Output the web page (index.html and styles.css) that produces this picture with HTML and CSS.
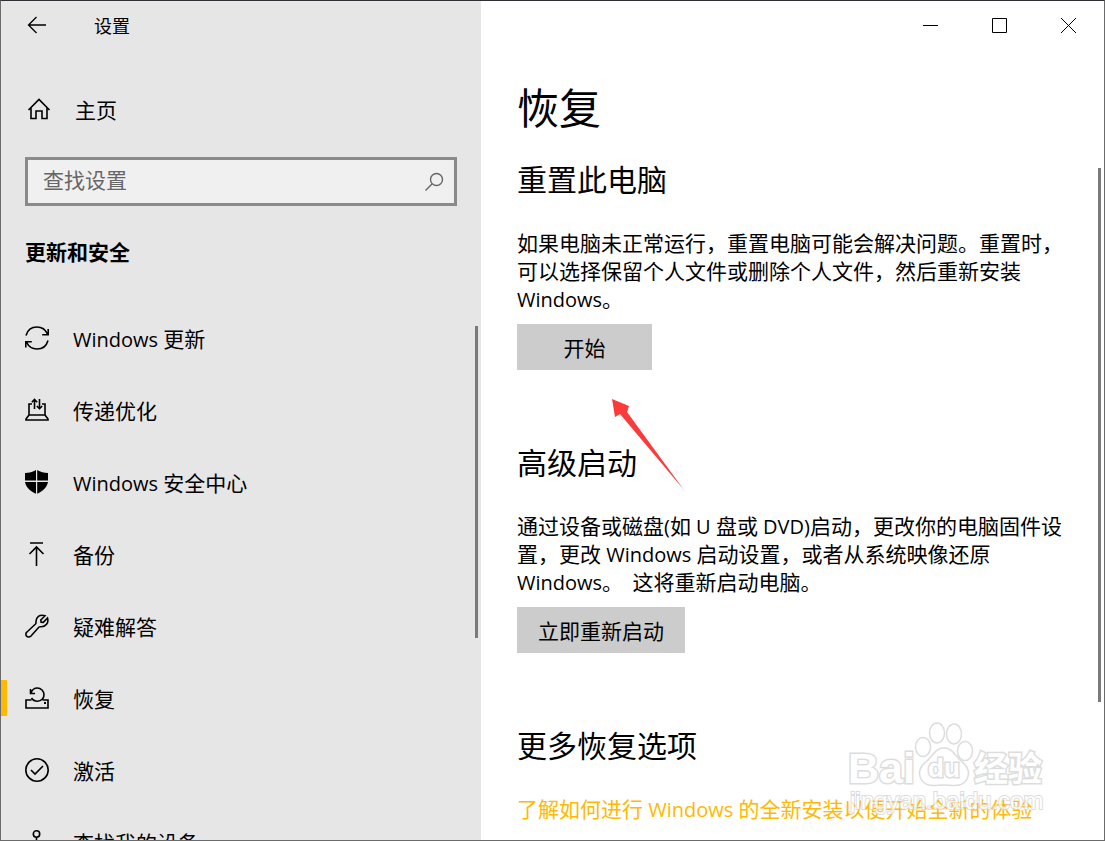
FILE: index.html
```html
<!DOCTYPE html>
<html lang="zh-CN">
<head>
<meta charset="utf-8">
<title>设置</title>
<link rel="stylesheet" href="styles.css">
</head>
<body>
<div class="window">
  <aside class="sidebar">
    <header class="side-bar-top">
      <button class="back" aria-label="返回"><svg width="20" height="18" viewBox="0 0 20 18"><path d="M19 9H1.500M9.500 1 1.500 9l8 8"/></svg></button>
      <span class="app-title">设置</span>
    </header>
    <a class="home" href="#"><svg width="24" height="24" viewBox="0 0 24 24"><path d="M1.500 13 12 2.500 22.500 13M4 11v10.500h5V14h6v7.500h5V11"/></svg>主页</a>
    <form class="search">
      <input class="search-input" type="search" aria-label="查找设置" placeholder="查找设置">
      <button class="search-button" type="button" aria-label="搜索"><svg width="20" height="20" viewBox="0 0 20 20"><circle cx="12.500" cy="7.500" r="6"/><path d="M8 12 1.500 18.500"/></svg></button>
    </form>
    <h2 class="category">更新和安全</h2>
    <nav class="nav">
      <a class="nav-item" href="#"><svg width="24" height="24" viewBox="0 0 24 24"><path d="M1 9.500C2.500 4 7 1 12 1c4.500 0 8.500 2.500 10.500 7M23.200 3v5.800h-6M23 14.500C21.500 20 17 23 12 23c-4.500 0-8.500-2.500-10.500-7M.8 21.500v-5.700h6"/></svg><span><span class="latin">Windows </span>更新</span></a>
      <a class="nav-item" href="#"><svg width="24" height="24" viewBox="0 0 24 24"><path d="M7 6H4v11h16V6h-3M4 17l-3 4v1h22v-1l-3-4M9.500 11V1.500M6.800 4.200l2.700-2.700 2.700 2.700M14.500 1v10M11.800 8l2.700 2.700L17.200 8"/></svg><span>传递优化</span></a>
      <a class="nav-item" href="#"><svg width="24" height="24" viewBox="0 0 24 24"><path class="solid" d="M11 0v10.500H0V3C4 3 8 2 11 0ZM12.200 0c3 2 7 3 10.800 3v7.500H12.200ZM0 12h11v11.800C5 21 .8 17 0 12ZM12.200 12H23c-.8 5-5 9-10.800 11.800Z"/></svg><span><span class="latin">Windows </span>安全中心</span></a>
      <a class="nav-item" href="#"><svg width="24" height="24" viewBox="0 0 24 24"><path d="M5 1h13M11.500 24V5M4.500 12l7-7 7 7"/></svg><span>备份</span></a>
      <a class="nav-item" href="#"><svg width="24" height="24" viewBox="0 0 24 24"><path d="M20 1.800 15.800 6l.3 2.200 2.200.2L22.500 4c1.500 5-1.800 9-6.500 8.800-1-.1-1.500-.2-2 .2L6 22c-1.500 1.500-3.500 1.300-4.500 0-1-1.200-.8-3 .5-4l8.500-8c.5-.5.500-1 .5-1.500C10.500 3 15 0 20 1.800Z"/></svg><span>疑难解答</span></a>
      <a class="nav-item current" href="#" aria-current="page"><svg width="24" height="24" viewBox="0 0 24 24"><path d="M6.500 14H1v8h22v-8h-5.500M5.500 3v4.500H10M6 7c1.200-3.500 3.500-5 6.300-5C16 2 19 5 19 8.700c0 3.600-2.800 6.500-6.500 6.500-2.800 0-4.800-1.200-6-3.200"/><path class="solid" d="M19 16h2v2h-2z"/></svg><span>恢复</span></a>
      <a class="nav-item" href="#"><svg width="24" height="24" viewBox="0 0 24 24"><circle cx="12" cy="12" r="11.200"/><path d="m6 12 4 4 8-8"/></svg><span>激活</span></a>
      <a class="nav-item" href="#"><svg width="24" height="24" viewBox="0 0 24 24"><circle cx="11.500" cy="4" r="3.200"/><path d="M11.500 7.200V16M7 13c-3 1-5 2.500-5 4.500C2 20 6 22 11.500 22s9.500-2 9.500-4.500c0-2-2-3.500-5-4.500"/></svg><span>查找我的设备</span></a>
    </nav>
    <div class="scroll side-scroll"></div>
  </aside>
  <main class="main">
    <header class="caption">
      <button class="cap" aria-label="最小化"><svg width="15" height="15" viewBox="0 0 15 15"><path d="M0 7.500h15"/></svg></button>
      <button class="cap" aria-label="最大化"><svg width="15" height="15" viewBox="0 0 15 15"><path d="M.5.500h14v14H.5z"/></svg></button>
      <button class="cap" aria-label="关闭"><svg width="15" height="15" viewBox="0 0 15 15"><path d="m0 0 15 15M15 0 0 15"/></svg></button>
    </header>
    <div class="content">
      <h1 class="page-title">恢复</h1>
      <section class="section">
        <h2 class="section-title">重置此电脑</h2>
        <p class="text">如果电脑未正常运行，重置电脑可能会解决问题。重置时，可以选择保留个人文件或删除个人文件，然后重新安装 <span class="latin">Windows</span>。</p>
        <button class="action">开始</button>
      </section>
      <section class="section">
        <h2 class="section-title">高级启动</h2>
        <p class="text">通过设备或磁盘<span class="latin">(</span>如<span class="latin"> U </span>盘或<span class="latin"> DVD)</span>启动，更改你的电脑固件设置，更改<span class="latin"> Windows </span>启动设置，或者从系统映像还原 <span class="latin">Windows</span>。 &nbsp;这将重新启动电脑。</p>
        <button class="action">立即重新启动</button>
      </section>
      <section class="section">
        <h2 class="section-title">更多恢复选项</h2>
        <p class="text"><a class="link" href="#">了解如何进行<span class="latin"> Windows </span>的全新安装以便开始全新的体验</a></p>
      </section>
    </div>
    <div class="scroll main-scroll"></div>
    <svg class="pointer" width="74" height="92" viewBox="0 0 74 92"><path d="M1 1 18 8l-2 6 57 78L9 16l-5 3Z"/></svg>
    <svg class="watermark" width="200" height="100" viewBox="0 0 200 100">
      <g class="mark">
        <ellipse cx="74" cy="26" rx="7.500" ry="9.500"/>
        <ellipse cx="88" cy="12" rx="7.500" ry="10"/>
        <ellipse cx="105" cy="13" rx="7.500" ry="10"/>
        <ellipse cx="116" cy="30" rx="7.500" ry="9.500"/>
        <path d="M95 27c-9 0-11 8-17 13-8 6-9 12-6 18 5 9 14 6 23 6s18 3 23-6c3-6 2-12-6-18-6-5-8-13-17-13Z"/>
        <text class="mark-bai" x="-1" y="62">Bai</text>
        <text class="mark-du" x="79" y="56">du</text>
        <text class="mark-cn" x="125" y="60">经验</text>
        <text class="mark-url" x="1" y="88">jingyan.baidu.com</text>
      </g>
    </svg>
  </main>
</div>
</body>
</html>
```
FILE: styles.css
```css
* { box-sizing: border-box; }
body {
  margin: 0;
  color: #000;
  font: 400 21px/28px "Noto Sans CJK SC", "Open Sans", sans-serif;
}
h1, h2, p { margin: 0; font-weight: 400; }
a { color: inherit; text-decoration: none; }
button {
  margin: 0;
  padding: 0;
  border: 0;
  background: none;
  color: inherit;
  font: inherit;
}
svg {
  flex: none;
  fill: none;
  stroke: #000;
  stroke-width: 1.6;
}
.solid { fill: #000; stroke: none; }
.latin {
  font-family: "Open Sans", "Noto Sans", sans-serif;
  font-size: 20px;
  line-height: 20px;
}

.window {
  display: flex;
  height: 100vh;
  overflow: hidden;
  border: 1px solid #6b6b6b;
  border-top-color: #302e32;
  background: #fff;
}

.sidebar {
  position: relative;
  flex: none;
  width: 480px;
  background: #e6e6e6;
}
.side-bar-top {
  display: flex;
  align-items: center;
  gap: 47px;
  height: 48px;
  padding-left: 26px;
}
.back { display: flex; }
.back svg { stroke-width: 1.3; }
.app-title { font-size: 18px; }
.home {
  display: flex;
  align-items: center;
  gap: 24px;
  height: 48px;
  margin-top: 36px;
  padding-left: 26px;
}
.search {
  display: flex;
  align-items: center;
  height: 49px;
  margin: 24px 24px 0;
  border: 3px solid #8a8a8a;
  background: #f0f0f0;
}
.search-input {
  flex: 1;
  min-width: 0;
  height: 28px;
  margin-bottom: 6px;
  padding: 0 15px;
  border: 0;
  outline: 0;
  background: none;
  font: inherit;
}
.search-input::placeholder { color: #666; }
.search-button { display: flex; padding-right: 10px; }
.search-button svg { stroke: #666; stroke-width: 1.4; }
.category {
  margin: 31px 24px 0;
  font-size: 21px;
  font-weight: 700;
}
.nav { margin-top: 37px; }
.nav-item {
  display: flex;
  align-items: center;
  gap: 24px;
  height: 72px;
  padding-left: 24px;
}
.current {
  background: linear-gradient(#ffb900, #ffb900) left center / 6px 36px no-repeat;
}
.scroll { position: absolute; width: 3px; background: #7a7a7a; }
.side-scroll { top: 325px; right: 3px; height: 312px; }

.main {
  position: relative;
  flex: 1;
  min-width: 0;
}
.caption {
  display: flex;
  justify-content: flex-end;
  height: 48px;
  padding-right: 1px;
}
.cap {
  display: flex;
  align-items: center;
  justify-content: center;
  width: 69px;
}
.cap svg { stroke-width: 1; }
.content { padding: 29px 34px 0 36px; }
.page-title { font-size: 42px; line-height: 56px; }
.section { margin-bottom: 71px; }
.page-title + .section { margin-top: 24px; }
.section-title {
  margin-bottom: 30px;
  font-size: 30px;
  line-height: 40px;
}
.action {
  display: block;
  min-width: 135px;
  height: 46px;
  margin-top: 12px;
  padding: 0 21px;
  background: #ccc;
}
.link { color: #ffb900; }
.main-scroll { top: 167px; right: 3px; height: 534px; }

.pointer { position: absolute; top: 397px; left: 130px; }
.pointer path { fill: #fb3b3b; stroke: none; }
.watermark { position: absolute; right: 55px; bottom: 19px; opacity: 0.75; }
.mark { fill: #fff; stroke: #d2d2d2; stroke-width: 1.5; }
.mark text { paint-order: stroke; stroke-width: 3; }
.mark-bai { font: 700 43px "Liberation Sans", sans-serif; }
.mark-du { font: 700 26px "Liberation Sans", sans-serif; }
.mark-cn { font: 700 34px "Noto Sans CJK SC", sans-serif; }
.mark .mark-url { font: 400 24px "Liberation Sans", sans-serif; stroke-width: 2; }
```
